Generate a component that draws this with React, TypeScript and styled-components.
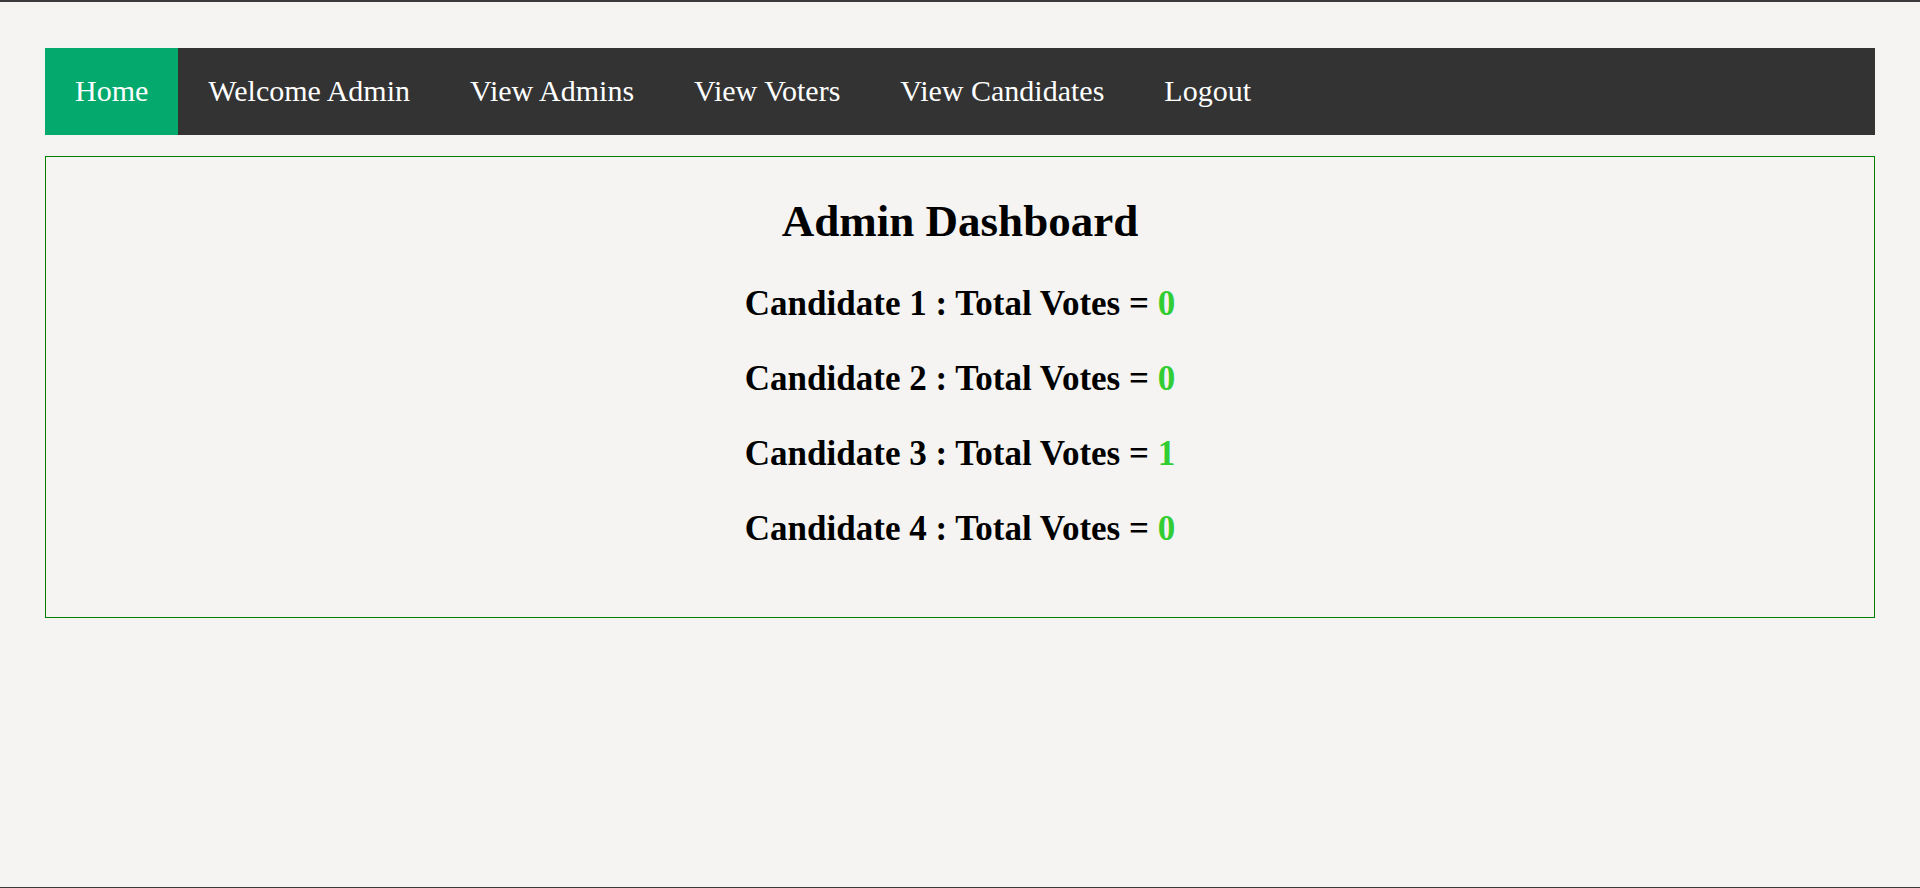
import React from "react";
import styled, { createGlobalStyle } from "styled-components";

const GlobalStyle = createGlobalStyle`
  html, body {
    margin: 0;
    padding: 0;
    background: #f5f4f2;
    font-family: "Liberation Serif", "Times New Roman", serif;
  }
  * { box-sizing: border-box; }
`;

const Page = styled.div`
  min-height: 100vh;
  border-top: 2px solid #3a3a3c;
  border-bottom: 1px solid #3a3a3c;
  padding: 46px 45px 0;
  display: flex;
  flex-direction: column;
`;

const NavBar = styled.nav`
  display: flex;
  background: #333333;
  height: 87px;
`;

const NavLink = styled.a<{ $active?: boolean }>`
  display: block;
  padding: 25px 30px 27px;
  font-size: 30px;
  line-height: 35px;
  color: #ffffff;
  text-decoration: none;
  background: ${(p) => (p.$active ? "#04AA6D" : "transparent")};
  cursor: pointer;
`;

const Panel = styled.section`
  margin-top: 21px;
  border: 1px solid #008000;
  padding: 38px 0 68px;
  display: flex;
  flex-direction: column;
  align-items: center;
  gap: 35px;
`;

const Title = styled.h2`
  margin: 0 0 2px;
  font-size: 45px;
  line-height: 52px;
  font-weight: bold;
  color: #000;
`;

const VoteLine = styled.h3`
  margin: 0;
  font-size: 35px;
  line-height: 40px;
  font-weight: bold;
  color: #000;
`;

const Count = styled.span`
  color: #32cd32;
`;

const links = [
  "Home",
  "Welcome Admin",
  "View Admins",
  "View Voters",
  "View Candidates",
  "Logout",
];

const votes = [0, 0, 1, 0];

export default function App() {
  return (
    <>
      <GlobalStyle />
      <Page>
        <NavBar>
          {links.map((l, i) => (
            <NavLink key={l} $active={i === 0}>
              {l}
            </NavLink>
          ))}
        </NavBar>
        <Panel>
          <Title>Admin Dashboard</Title>
          {votes.map((v, i) => (
            <VoteLine key={i}>
              Candidate {i + 1} : Total Votes = <Count>{v}</Count>
            </VoteLine>
          ))}
        </Panel>
      </Page>
    </>
  );
}
